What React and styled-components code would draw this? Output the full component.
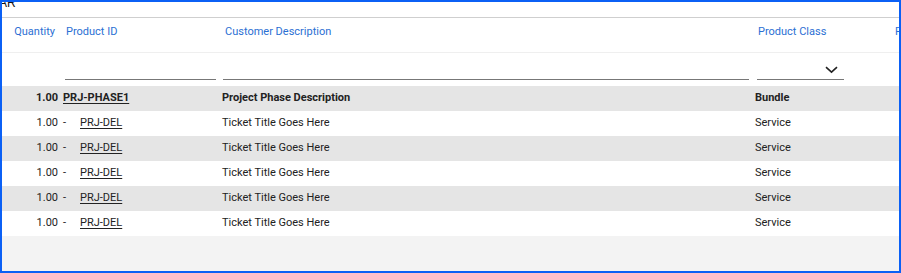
import styled, { createGlobalStyle } from 'styled-components';

const GlobalStyle = createGlobalStyle`
    html, body {
        margin:0;
        padding:0;
        background:#fff;
    }
    body{
        font-family: Roboto, "Liberation Sans", Arial, sans-serif;
    }
`

const columns = [
    { key: 'qty', label: 'Quantity', align: 'right' },
    { key: 'pid', label: 'Product ID', pl: 6 },
    { key: 'desc', label: 'Customer Description', pl: 5 },
    { key: 'cls', label: 'Product Class', pl: 5 },
    { key: 'price', label: 'Price', pl: 2 },
];

const lines = [
    { qty: '1.00', pid: 'PRJ-PHASE1', desc: 'Project Phase Description', cls: 'Bundle', parent: true },
    { qty: '1.00', pid: 'PRJ-DEL', desc: 'Ticket Title Goes Here', cls: 'Service' },
    { qty: '1.00', pid: 'PRJ-DEL', desc: 'Ticket Title Goes Here', cls: 'Service' },
    { qty: '1.00', pid: 'PRJ-DEL', desc: 'Ticket Title Goes Here', cls: 'Service' },
    { qty: '1.00', pid: 'PRJ-DEL', desc: 'Ticket Title Goes Here', cls: 'Service' },
    { qty: '1.00', pid: 'PRJ-DEL', desc: 'Ticket Title Goes Here', cls: 'Service' },
];

const Chevron = () => (
    <svg width="13" height="8" viewBox="0 0 13 8" fill="none">
        <path d="M1 1.2 L6.5 6.2 L12 1.2" stroke="#222" strokeWidth="1.6" />
    </svg>
)

const App = () => {
    return (
        <Frame>
            <GlobalStyle />
            <TopStrip>
                <Crumb>AR</Crumb>
            </TopStrip>
            <HeaderRow>
                {columns.map((c) => (
                    <HeaderCell key={c.key} $align={c.align} $pl={c.pl}>{c.label}</HeaderCell>
                ))}
            </HeaderRow>
            <FilterRow>
                <FilterCell />
                <FilterCell><TextFilter $ml={5} $w={151} /></FilterCell>
                <FilterCell><TextFilter $ml={3} $w={526} /></FilterCell>
                <FilterCell>
                    <SelectFilter>
                        <Chevron />
                    </SelectFilter>
                </FilterCell>
                <FilterCell />
            </FilterRow>
            {lines.map((line, i) => (
                <LineRow key={i} $shaded={i % 2 === 0} $bold={line.parent}>
                    <QtyCell>{line.qty}</QtyCell>
                    <Cell>
                        {!line.parent && <Dash>-</Dash>}
                        <ProductLink>{line.pid}</ProductLink>
                    </Cell>
                    <Cell $pl={2}>{line.desc}</Cell>
                    <Cell $pl={2}>{line.cls}</Cell>
                    <Cell />
                </LineRow>
            ))}
            <Rest />
        </Frame>
    )
}

// layout
const grid = `
    display:grid;
    grid-template-columns:58px 160px 533px 140px 1fr;
`

const Frame = styled.div`
    width:901px;
    height:273px;
    box-sizing:border-box;
    border:2px solid #0b60f5;
    background:#f3f3f3;
    display:flex;
    flex-direction:column;
    overflow:hidden;
`
const TopStrip = styled.div`
    height:15px;
    flex-shrink:0;
    background:#fff;
    border-bottom:1px solid #cfcfcf;
    overflow:hidden;
`
const Crumb = styled.div`
    font-family:"Liberation Sans", Arial, sans-serif;
    font-size:12px;
    line-height:12px;
    color:#111;
    margin-top:-5px;
    margin-left:-3px;
`
const HeaderRow = styled.div`
    ${grid}
    height:34px;
    flex-shrink:0;
    background:#fff;
    border-bottom:1px solid #efefef;
`
const HeaderCell = styled.div`
    padding:6px 4px 0 ${(p) => p.$pl ?? 4}px;
    font-size:11px;
    line-height:16px;
    color:#2b6fd3;
    white-space:nowrap;
    overflow:hidden;
    text-align:${(p) => p.$align || 'left'};
    ${(p) => p.$align === 'right' && 'padding-right:5px;'}
`
const FilterRow = styled.div`
    ${grid}
    height:33px;
    flex-shrink:0;
    background:#fff;
`
const FilterCell = styled.div`
    display:flex;
    align-items:flex-end;
    padding-bottom:6px;
`
const TextFilter = styled.div`
    height:20px;
    width:${(p) => p.$w}px;
    margin-left:${(p) => p.$ml}px;
    border-bottom:1px solid #777;
`
const SelectFilter = styled.div`
    height:20px;
    width:87px;
    margin-left:4px;
    border-bottom:1px solid #777;
    display:flex;
    align-items:flex-start;
    justify-content:flex-end;
    padding:6px 6px 0 0;
    box-sizing:border-box;
`
const LineRow = styled.div`
    ${grid}
    height:25px;
    flex-shrink:0;
    background:${(p) => (p.$shaded ? '#e5e5e5' : '#fff')};
    font-size:11px;
    line-height:23px;
    color:#222;
    font-weight:${(p) => (p.$bold ? 700 : 400)};
`
const Cell = styled.div`
    padding-left:${(p) => p.$pl ?? 3}px;
    white-space:nowrap;
    overflow:hidden;
`
const QtyCell = styled.div`
    text-align:right;
    padding-right:2px;
`
const Dash = styled.span`
    display:inline-block;
    width:17px;
`
const ProductLink = styled.span`
    text-decoration:underline;
    text-underline-offset:2px;
    color:#222;
`
const Rest = styled.div`
    flex:1;
    background:#f3f3f3;
`

export default App;
